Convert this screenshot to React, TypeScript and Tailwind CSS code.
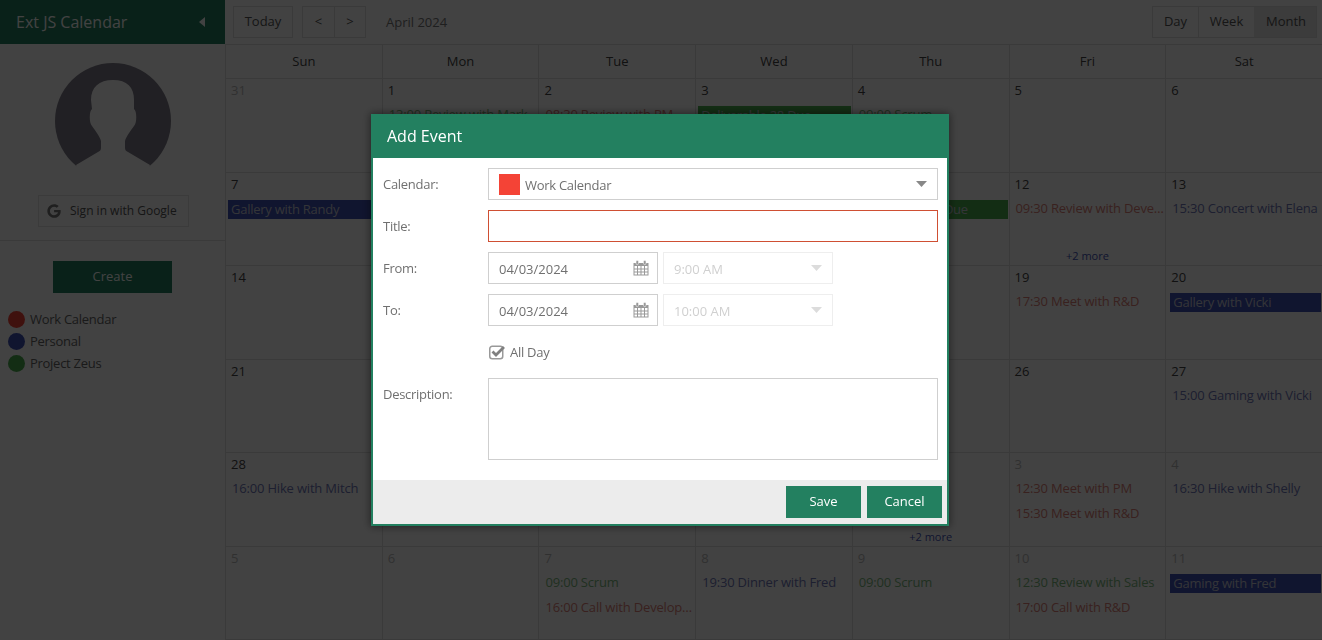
import React from "react";
import { FaGoogle } from "react-icons/fa";

type EventItem = {
  text: string;
  color: "red" | "blue" | "green";
  bar?: boolean;
  inset?: string;
};

interface DayCell {
  day: number;
  muted?: boolean;
  events?: EventItem[];
  more?: boolean;
}

const textColors = {
  red: "text-[#dc7f78]",
  blue: "text-[#6f78b8]",
  green: "text-[#7cb87e]",
};

const barColors = {
  red: "bg-[#f44336]",
  blue: "bg-[#3f51b5]",
  green: "bg-[#4caf50]",
};

const days = ["Sun", "Mon", "Tue", "Wed", "Thu", "Fri", "Sat"];

const weeks: DayCell[][] = [
  [
    { day: 31, muted: true },
    { day: 1, events: [{ text: "13:00 Review with Mark", color: "green" }] },
    { day: 2, events: [{ text: "08:30 Review with PM", color: "red" }] },
    { day: 3, events: [{ text: "Deliverable 28 Due", color: "green", bar: true, inset: "ml-[2px]" }] },
    { day: 4, events: [{ text: "09:00 Scrum", color: "green" }] },
    { day: 5 },
    { day: 6 },
  ],
  [
    { day: 7, events: [{ text: "Gallery with Randy", color: "blue", bar: true, inset: "ml-[2px]" }] },
    { day: 8 },
    { day: 9 },
    { day: 10 },
    { day: 11, events: [{ text: "Deliverable 29 Due", color: "green", bar: true, inset: "ml-[2px]" }] },
    {
      day: 12,
      events: [{ text: "09:30 Review with Developers", color: "red" }],
      more: true,
    },
    { day: 13, events: [{ text: "15:30 Concert with Elena", color: "blue" }] },
  ],
  [
    { day: 14 },
    { day: 15 },
    { day: 16 },
    { day: 17 },
    { day: 18 },
    { day: 19, events: [{ text: "17:30 Meet with R&D", color: "red" }] },
    { day: 20, events: [{ text: "Gallery with Vicki", color: "blue", bar: true, inset: "ml-[4px]" }] },
  ],
  [
    { day: 21 },
    { day: 22 },
    { day: 23 },
    { day: 24 },
    { day: 25 },
    { day: 26 },
    { day: 27, events: [{ text: "15:00 Gaming with Vicki", color: "blue" }] },
  ],
  [
    { day: 28, events: [{ text: "16:00 Hike with Mitch", color: "blue" }] },
    { day: 29 },
    { day: 30 },
    { day: 1, muted: true },
    { day: 2, muted: true, more: true },
    {
      day: 3,
      muted: true,
      events: [
        { text: "12:30 Meet with PM", color: "red" },
        { text: "15:30 Meet with R&D", color: "red" },
      ],
    },
    { day: 4, muted: true, events: [{ text: "16:30 Hike with Shelly", color: "blue" }] },
  ],
  [
    { day: 5, muted: true },
    { day: 6, muted: true },
    {
      day: 7,
      muted: true,
      events: [
        { text: "09:00 Scrum", color: "green" },
        { text: "16:00 Call with Developers", color: "red" },
      ],
    },
    { day: 8, muted: true, events: [{ text: "19:30 Dinner with Fred", color: "blue" }] },
    { day: 9, muted: true, events: [{ text: "09:00 Scrum", color: "green" }] },
    {
      day: 10,
      muted: true,
      events: [
        { text: "12:30 Review with Sales", color: "green" },
        { text: "17:00 Call with R&D", color: "red" },
      ],
    },
    { day: 11, muted: true, events: [{ text: "Gaming with Fred", color: "blue", bar: true, inset: "ml-[4px]" }] },
  ],
];

const CalendarIcon = () => (
  <svg width="16" height="16" viewBox="0 0 16 16" fill="none" className="shrink-0">
    <rect x="0.5" y="3" width="15" height="12.5" fill="#999" />
    <rect x="1.5" y="6" width="13" height="8.5" fill="#fff" />
    <path d="M1 9h14M1 12h14M4.5 6v9M8 6v9M11.5 6v9" stroke="#999" strokeWidth="1" />
    <rect x="3" y="0.5" width="2.5" height="4" rx="1" fill="#999" stroke="#fff" strokeWidth="0.5" />
    <rect x="10.5" y="0.5" width="2.5" height="4" rx="1" fill="#999" stroke="#fff" strokeWidth="0.5" />
  </svg>
);

const CheckIcon = () => (
  <svg width="16" height="16" viewBox="0 0 16 16" fill="none" className="shrink-0">
    <rect x="0.75" y="2.25" width="13" height="12.5" rx="2.5" stroke="#999" strokeWidth="1.5" />
    <path d="M3.5 7.5L7 11L15 3" stroke="#808080" strokeWidth="2.8" />
  </svg>
);

const Caret = ({ disabled }: { disabled?: boolean }) => (
  <svg width="11" height="6" viewBox="0 0 11 6" className="shrink-0">
    <path d="M0 0h11L5.5 6z" fill={disabled ? "#dcdcdc" : "#888"} />
  </svg>
);

const Avatar = () => (
  <svg width="116" height="106" viewBox="0 0 116 106">
    <circle cx="58" cy="58" r="58" fill="#807d8a" />
    <path
      d="M36 37C36 24 44 17 58 17C72 17 79 24 79 37V46C82 48 82 60 79 63C76 67 71 74 70 78V85C70 87 71 88 73 89L95 102L90 116H26L21 102L43 89C45 88 46 87 46 85V78C45 74 40 67 37 63C34 60 34 48 37 46Z"
      fill="#fff"
    />
  </svg>
);

const Sidebar = () => (
  <aside className="flex h-full w-[225px] shrink-0 flex-col bg-white">
    <div className="flex h-[44px] items-center justify-between bg-[#238060] pl-[16px] pr-[20px] text-white">
      <span className="text-base">Ext JS Calendar</span>
      <svg width="6" height="10" viewBox="0 0 6 10">
        <path d="M6 0v10L0 5z" fill="#fff" />
      </svg>
    </div>
    <div className="flex h-[197px] flex-col items-center border-b border-[#e0e0e0] pt-[19px]">
      <Avatar />
      <button className="ml-[2px] mt-[26px] flex h-[32px] w-[151px] items-center gap-[9px] border border-[#e5e5e5] pl-[8px] text-xs text-[#555]">
        <FaGoogle className="h-[14px] w-[14px] text-[#777]" />
        Sign in with Google
      </button>
    </div>
    <div className="flex justify-center pt-[20px]">
      <button className="h-[32px] w-[119px] bg-[#238060] text-[13px] text-white">Create</button>
    </div>
    <ul className="mt-[18px] flex flex-col gap-[5px] pl-[8px] text-[13px] tracking-[-0.28px] text-[#666]">
      <li className="flex h-[17px] items-center gap-[5px]">
        <span className="h-[17px] w-[17px] rounded-full bg-[#f44336]" />
        Work Calendar
      </li>
      <li className="flex h-[17px] items-center gap-[5px]">
        <span className="h-[17px] w-[17px] rounded-full bg-[#3f51b5]" />
        Personal
      </li>
      <li className="flex h-[17px] items-center gap-[5px]">
        <span className="h-[17px] w-[17px] rounded-full bg-[#4caf50]" />
        Project Zeus
      </li>
    </ul>
  </aside>
);

const Toolbar = () => (
  <div className="flex h-[44px] shrink-0 items-start justify-between px-[8px] pt-[6px] text-[13px] text-[#555]">
    <div className="flex items-center">
      <button className="h-[32px] w-[60px] border border-[#e0e0e0]">Today</button>
      <div className="ml-[9px] flex h-[32px] border border-[#e0e0e0]">
        <button className="w-[31px]">&lt;</button>
        <button className="w-[31px] border-l border-[#e0e0e0]">&gt;</button>
      </div>
      <span className="ml-[20px] pt-[2px] text-[#777]">April 2024</span>
    </div>
    <div className="mr-[-3px] flex h-[32px] border border-[#e0e0e0]">
      <button className="w-[45px]">Day</button>
      <button className="w-[56px] border-l border-[#e0e0e0]">Week</button>
      <button className="w-[62px] bg-[#e6e6e6] pl-[2px]">Month</button>
    </div>
  </div>
);

const EventRow = ({ event }: { event: EventItem }) => {
  if (event.bar) {
    return (
      <div
        className={`mb-[6px] mr-px mt-[1px] h-[19px] truncate pl-[3px] leading-[18px] tracking-[-0.25px] text-[#c8cbd8] ${barColors[event.color]} ${event.inset}`}
      >
        {event.text}
      </div>
    );
  }
  return (
    <div className={`mb-[6px] h-[19px] truncate pl-[6px] leading-[19px] tracking-[-0.18px] ${textColors[event.color]}`}>
      {event.text}
    </div>
  );
};

const Cell = ({ cell }: { cell: DayCell }) => (
  <div className="flex min-w-0 flex-col border-b border-l border-[#e0e0e0] text-[13px]">
    <div className={`h-[26px] shrink-0 pl-[5px] pt-[1px] leading-[20px] ${cell.muted ? "text-[#bbb]" : "text-[#444]"}`}>
      {cell.day}
    </div>
    {cell.events?.map((event) => (
      <EventRow key={event.text} event={event} />
    ))}
    {cell.more && <div className="mt-auto h-[17px] text-center text-[11px] leading-[16px] text-[#3f51b5]">+2 more</div>}
  </div>
);

const Calendar = () => (
  <main className="flex h-full min-w-0 flex-1 flex-col bg-white">
    <Toolbar />
    <div className="grid h-[35px] shrink-0 grid-cols-7 border-y border-[#e0e0e0] text-[13px] text-[#444]">
      {days.map((name) => (
        <div key={name} className="flex items-center justify-center border-l border-[#e0e0e0]">
          {name}
        </div>
      ))}
    </div>
    <div className="grid min-h-0 flex-1 grid-cols-7 grid-rows-6">
      {weeks.map((week, w) =>
        week.map((cell, d) => <Cell key={`${w}-${d}`} cell={cell} />)
      )}
    </div>
  </main>
);

const Field = ({ label, children }: { label?: string; children: React.ReactNode }) => (
  <div className="mt-[10px] flex items-start">
    <label className="h-[32px] w-[105px] shrink-0 leading-[32px] tracking-[-0.28px] text-[#707070]">{label}</label>
    {children}
  </div>
);

const Dialog = () => (
  <div className="fixed left-[371px] top-[114px] w-[578px] border-x-2 border-b-2 border-[#238060] bg-white text-[13px] shadow-[0_0_8px_1px_rgba(0,0,0,0.45)]">
    <div className="mx-[-2px] flex h-[44px] items-center bg-[#238060] pl-[16px] text-base text-white">Add Event</div>
    <div className="pb-[20px] pl-[10px]">
      <Field label="Calendar:">
        <div className="flex h-[32px] w-[450px] items-center border border-[#cfcfcf] pl-[10px] pr-[10px] text-[#707070]">
          <span className="h-[21px] w-[21px] bg-[#f44336]" />
          <span className="ml-[5px] flex-1 pt-[4px] tracking-[-0.28px]">Work Calendar</span>
          <Caret />
        </div>
      </Field>
      <Field label="Title:">
        <div className="h-[32px] w-[450px] border border-[#cf4f33]" />
      </Field>
      {[
        { label: "From:", time: "9:00 AM" },
        { label: "To:", time: "10:00 AM" },
      ].map((row) => (
        <Field key={row.label} label={row.label}>
          <div className="flex h-[32px] w-[170px] items-center justify-between border border-[#cfcfcf] pl-[10px] pr-[8px] text-[#707070]">
            <span className="pt-[4px]">04/03/2024</span>
            <CalendarIcon />
          </div>
          <div className="ml-[5px] flex h-[32px] w-[170px] items-center justify-between border border-[#eeeeee] pl-[10px] pr-[10px] text-[#d0d0d0]">
            <span className="pt-[4px]">{row.time}</span>
            <Caret disabled />
          </div>
        </Field>
      ))}
      <Field>
        <div className="flex h-[32px] items-center gap-[5px] pl-[1px] tracking-[-0.28px] text-[#707070]">
          <CheckIcon />
          <span className="pt-[2px]">All Day</span>
        </div>
      </Field>
      <div className="mt-[10px] flex items-start">
        <label className="h-[32px] w-[105px] shrink-0 leading-[32px] tracking-[-0.28px] text-[#707070]">Description:</label>
        <div className="h-[82px] w-[450px] border border-[#cfcfcf]" />
      </div>
    </div>
    <div className="flex h-[44px] justify-end gap-[6px] bg-[#ececec] pr-[5px] pt-[6px] text-white">
      <button className="h-[32px] w-[75px] bg-[#238060]">Save</button>
      <button className="h-[32px] w-[75px] bg-[#238060]">Cancel</button>
    </div>
  </div>
);

const App = () => {
  return (
    <div className="relative flex h-[640px] w-full overflow-hidden bg-white font-['Open_Sans',sans-serif]">
      <Sidebar />
      <Calendar />
      <div className="fixed inset-0 bg-[rgba(0,0,0,0.74)]" />
      <Dialog />
    </div>
  );
};

export default App;
